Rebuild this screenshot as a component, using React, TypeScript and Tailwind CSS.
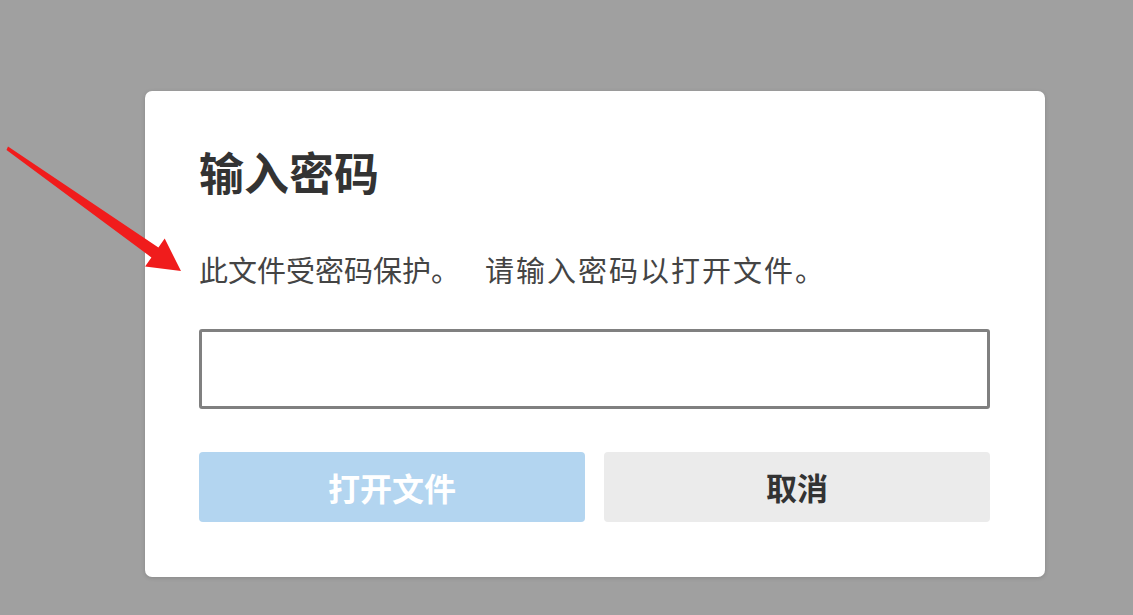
export default function App() {
  return (
    <div
      className="relative h-[615px] w-[1133px] overflow-hidden bg-[#a0a0a0] pl-[145px] pt-[91px]"
      style={{ fontFamily: '"Noto Sans CJK SC", "Noto Sans", sans-serif' }}
    >
      <div className="flex h-[486px] w-[900px] flex-col rounded-[7px] bg-white pl-[54px] pr-[55px] pt-[59px] shadow-[0_1px_4px_rgba(0,0,0,0.15)]">
        <h1 className="text-[45px] font-bold leading-[44px] text-[#333]">输入密码</h1>
        <p className="mt-[60px] whitespace-nowrap text-[29px] leading-[30px] text-[#444]">
          此文件受密码保护。<span className="ml-[25px] tracking-[2px]">请输入密码以打开文件。</span>
        </p>
        <input
          type="password"
          className="mt-[45px] h-[80px] w-full rounded-[3px] border-[3px] border-[#808080] bg-white px-3 outline-none"
        />
        <div className="mt-[43px] flex gap-[19px]">
          <button
            disabled
            className="flex h-[70px] flex-1 items-center justify-center rounded-[4px] bg-[#b3d5f0] text-[32px] font-bold text-white"
          >
            打开文件
          </button>
          <button className="flex h-[70px] flex-1 items-center justify-center rounded-[4px] bg-[#ebebeb] text-[31px] font-bold text-[#333]">
            取消
          </button>
        </div>
      </div>

      {/* red annotation arrow */}
      <svg className="pointer-events-none absolute left-0 top-0" width="1133" height="615">
        <polygon
          points="8,146.5 158.4,247.6 164.7,238.6 181,271 145.1,266.4 151.4,257.4 6.5,150"
          fill="#f01c1c"
        />
      </svg>
    </div>
  );
}
